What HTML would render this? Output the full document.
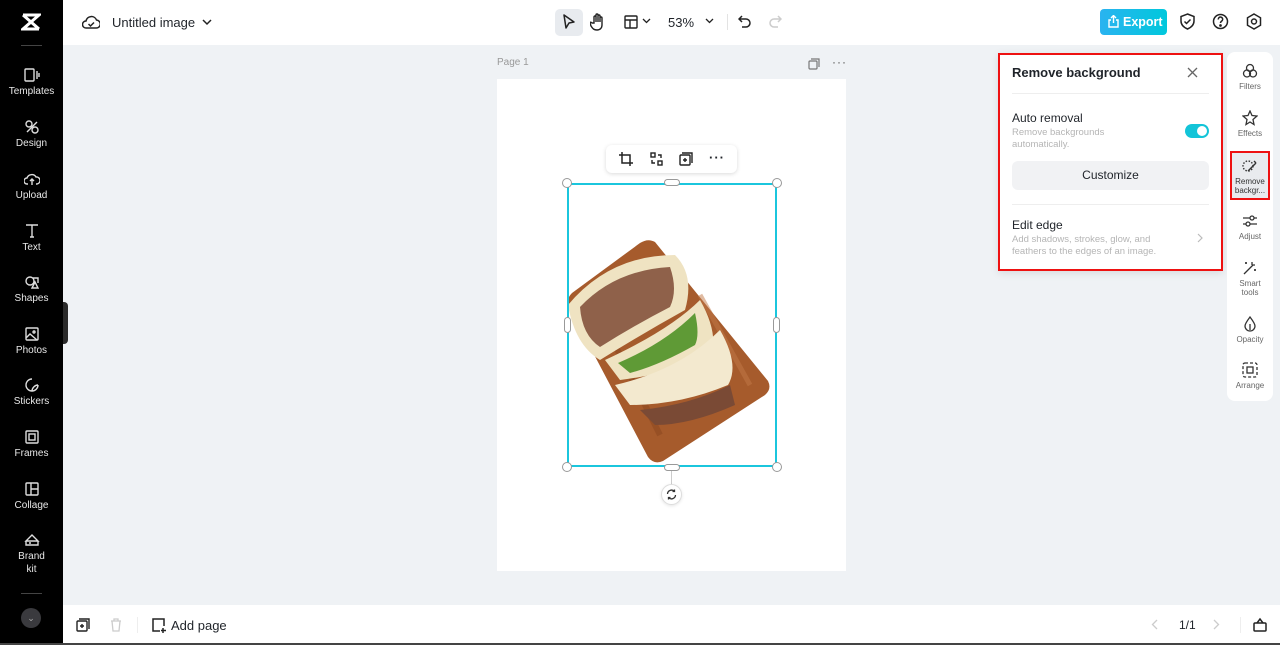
<!DOCTYPE html>
<html><head><meta charset="utf-8"><style>
*{margin:0;padding:0;box-sizing:border-box}
body{width:1280px;height:645px;overflow:hidden;background:#eff2f5;font-family:"Liberation Sans",sans-serif;position:relative;color:#1f2329}
.abs{position:absolute}
#side{left:0;top:0;width:63px;height:645px;background:#000}
.si{position:absolute;left:0;width:63px;text-align:center;color:#e8e8e8;font-size:10px;line-height:13px}
.si svg{display:block;margin:0 auto 3px}
#top{left:63px;top:0;width:1217px;height:45px;background:#fff}
#bot{left:63px;top:605px;width:1217px;height:40px;background:#fff}
.rt{position:absolute;left:0;width:46px;text-align:center;font-size:8px;line-height:9px;color:#666}
.rt svg{display:block;margin:0 auto 3px}
</style></head><body>
<div id="side" class="abs">
 <svg class="abs" style="left:21px;top:13px" width="20" height="18" viewBox="0 0 20 18"><path d="M2 2h16L2 16h16M2 2l16 14" stroke="#fff" stroke-width="3" fill="none"/></svg>
 <div class="abs" style="left:21px;top:45px;width:21px;height:1px;background:#444"></div>
 <div class="si" style="top:68px"><svg width="16" height="14" viewBox="0 0 16 14" fill="none" stroke="#ddd" stroke-width="1.4"><rect x="1" y="1" width="9" height="12" rx="1"/><path d="M13 3v8M15 5v4"/></svg>Templates</div>
 <div class="si" style="top:120px"><svg width="16" height="14" viewBox="0 0 16 14" fill="none" stroke="#ddd" stroke-width="1.4"><circle cx="5" cy="4" r="3"/><circle cx="11" cy="10" r="3"/><path d="M3 12l10-10"/></svg>Design</div>
 <div class="si" style="top:172px"><svg width="16" height="14" viewBox="0 0 16 14" fill="none" stroke="#ddd" stroke-width="1.4"><path d="M4 12H3a3 3 0 010-6 5 5 0 019-1 3 3 0 011 7h-1M8 13V7M6 9l2-2 2 2"/></svg>Upload</div>
 <div class="si" style="top:223px"><svg width="16" height="15" viewBox="0 0 16 15" fill="none" stroke="#ddd" stroke-width="1.4"><path d="M2 2h12M8 2v12M6 14h4"/></svg>Text</div>
 <div class="si" style="top:275px"><svg width="16" height="14" viewBox="0 0 16 14" fill="none" stroke="#ddd" stroke-width="1.4"><circle cx="6" cy="6" r="4"/><path d="M9 3h5v5M8 13l3-6 3 6z"/></svg>Shapes</div>
 <div class="si" style="top:327px"><svg width="16" height="14" viewBox="0 0 16 14" fill="none" stroke="#ddd" stroke-width="1.4"><rect x="2" y="1" width="12" height="12" rx="1"/><path d="M2 11l4-4 7 6"/><circle cx="10" cy="5" r="1"/></svg>Photos</div>
 <div class="si" style="top:378px"><svg width="16" height="14" viewBox="0 0 16 14" fill="none" stroke="#ddd" stroke-width="1.4"><path d="M14 7A6 6 0 118 1M14 7c-3 0-6 3-6 6"/></svg>Stickers</div>
 <div class="si" style="top:430px"><svg width="16" height="14" viewBox="0 0 16 14" fill="none" stroke="#ddd" stroke-width="1.4"><rect x="2" y="1" width="12" height="12" rx="1"/><rect x="5" y="4" width="6" height="6"/></svg>Frames</div>
 <div class="si" style="top:482px"><svg width="16" height="14" viewBox="0 0 16 14" fill="none" stroke="#ddd" stroke-width="1.4"><rect x="2" y="1" width="12" height="12" rx="1"/><path d="M7 1v12M7 7h7"/></svg>Collage</div>
 <div class="si" style="top:533px"><svg width="16" height="14" viewBox="0 0 16 14" fill="none" stroke="#ddd" stroke-width="1.4"><path d="M2 8l6-6 6 6zM2 8v4h12V8M5 10h2"/></svg>Brand<br>kit</div>
 <div class="abs" style="left:21px;top:593px;width:21px;height:1px;background:#444"></div>
 <div class="abs" style="left:21px;top:608px;width:20px;height:20px;border-radius:50%;background:#3a3a3e;color:#aaa;font-size:9px;text-align:center;line-height:20px">⌄</div>
 <div class="abs" style="left:63px;top:302px;width:5px;height:42px;background:#2a2a2a;border-radius:0 4px 4px 0"></div>
</div>

<div id="top" class="abs">
 <svg class="abs" style="left:19px;top:14px" width="18" height="16" viewBox="0 0 18 16" fill="none" stroke="#222" stroke-width="1.5"><path d="M5 14H4a3 3 0 010-7 5.5 5.5 0 0110.5-1A3.5 3.5 0 0114 14z"/><path d="M6.5 10l2 2 3.5-3.5"/></svg>
 <div class="abs" style="left:49px;top:15px;font-size:13px">Untitled image</div>
 <svg class="abs" style="left:139px;top:18px" width="10" height="8" viewBox="0 0 10 8"><path d="M1 2l4 4 4-4" stroke="#222" stroke-width="1.5" fill="none"/></svg>
 <div class="abs" style="left:492px;top:9px;width:28px;height:27px;background:#e8ebef;border-radius:5px"></div>
 <svg class="abs" style="left:499px;top:14px" width="14" height="16" viewBox="0 0 14 16"><path d="M2 1l10 7-5 1-3 5z" stroke="#222" stroke-width="1.5" fill="none" stroke-linejoin="round"/></svg>
 <svg class="abs" style="left:527px;top:13px" width="16" height="18" viewBox="0 0 16 18" fill="none" stroke="#222" stroke-width="1.4"><path d="M4 10V4a1 1 0 012 0v5V2a1 1 0 012 0v7V3a1 1 0 012 0v6V5a1 1 0 012 0v7c0 3-2 5-5 5s-4-1-6-4l-1-3c0-1 1-1 2 0z"/></svg>
 <svg class="abs" style="left:561px;top:15px" width="14" height="14" viewBox="0 0 14 14" fill="none" stroke="#222" stroke-width="1.4"><rect x="1" y="1" width="12" height="12" rx="1"/><path d="M1 5h12M6 5v8"/></svg>
 <svg class="abs" style="left:579px;top:18px" width="9" height="6" viewBox="0 0 9 6"><path d="M1 1l3.5 3.5L8 1" stroke="#222" stroke-width="1.3" fill="none"/></svg>
 <div class="abs" style="left:605px;top:15px;font-size:13px">53%</div>
 <svg class="abs" style="left:642px;top:18px" width="9" height="6" viewBox="0 0 9 6"><path d="M1 1l3.5 3.5L8 1" stroke="#222" stroke-width="1.3" fill="none"/></svg>
 <div class="abs" style="left:664px;top:14px;width:1px;height:16px;background:#e3e3e3"></div>
 <svg class="abs" style="left:675px;top:14px" width="14" height="16" viewBox="0 0 14 16" fill="none" stroke="#222" stroke-width="1.5"><path d="M4 2L1 5l3 3M1 5h7a4 4 0 010 8H4"/></svg>
 <svg class="abs" style="left:705px;top:14px" width="14" height="16" viewBox="0 0 14 16" fill="none" stroke="#ccc" stroke-width="1.5"><path d="M10 2l3 3-3 3M13 5H6a4 4 0 000 8h4"/></svg>
 <div class="abs" style="left:1037px;top:9px;width:67px;height:26px;border-radius:4px;background:linear-gradient(90deg,#2ab3f0,#00c8dc);color:#fff;font-size:12.5px;font-weight:bold;line-height:26px;padding-left:23px">Export</div>
 <svg class="abs" style="left:1045px;top:15px" width="11" height="13" viewBox="0 0 11 13" fill="none" stroke="#fff" stroke-width="1.4"><path d="M3 5H1v7h9V5H8M5.5 8V1M3 3l2.5-2.5L8 3"/></svg>
 <svg class="abs" style="left:1117px;top:13px" width="15" height="17" viewBox="0 0 15 17" fill="none" stroke="#222" stroke-width="1.5"><path d="M7.5 1L14 3.5V8c0 4-3 6.5-6.5 8C4 14.5 1 12 1 8V3.5z"/><path d="M4.5 8.5l2 2 4-4"/></svg>
 <svg class="abs" style="left:1149px;top:13px" width="17" height="17" viewBox="0 0 17 17" fill="none" stroke="#222" stroke-width="1.5"><circle cx="8.5" cy="8.5" r="7"/><path d="M6.3 6.5a2.2 2.2 0 114 1c-1 .7-1.8 1.2-1.8 2.5"/><circle cx="8.5" cy="12.5" r=".6" fill="#222"/></svg>
 <svg class="abs" style="left:1183px;top:13px" width="16" height="17" viewBox="0 0 16 17" fill="none" stroke="#222" stroke-width="1.5"><path d="M8 1l6.5 3.75v7.5L8 16l-6.5-3.75v-7.5z"/><circle cx="8" cy="8.5" r="2.5"/></svg>
</div>

<div class="abs" style="left:497px;top:57px;font-size:10px;color:#999">Page 1</div>
<svg class="abs" style="left:808px;top:58px" width="12" height="12" viewBox="0 0 12 12" fill="none" stroke="#777" stroke-width="1.2"><rect x="1" y="3" width="8" height="8" rx="1"/><path d="M3 1h8v8"/></svg>
<div class="abs" style="left:832px;top:55px;font-size:12px;color:#555;letter-spacing:1px">···</div>
<div class="abs" style="left:497px;top:79px;width:349px;height:492px;background:#fff"></div>

<!-- food: svg origin at (560,235) -->
<svg class="abs" style="left:560px;top:235px" width="220" height="235" viewBox="0 0 220 235">
 <path d="M95 7 Q88 3 80 8 L12 58 Q5 65 9 72 L88 222 Q94 230 103 226 L205 160 Q212 154 208 146 Z" fill="#a65b2c"/>
 <path d="M30 60 L100 200" stroke="#8a4720" stroke-width="6" opacity=".5"/>
 <path d="M140 60 L190 150" stroke="#c27a48" stroke-width="5" opacity=".5"/>
 <path d="M8 70 Q50 20 115 20 Q135 40 125 75 Q80 100 40 125 Q15 110 8 70 Z" fill="#efe3c2"/>
 <path d="M20 72 Q55 35 110 32 Q118 55 110 72 Q75 90 40 112 Q22 100 20 72 Z" fill="#8f614a"/>
 <path d="M45 125 Q110 95 140 65 Q160 100 150 125 Q100 140 60 145 Z" fill="#efe3c2"/>
 <path d="M58 128 Q105 108 135 78 Q140 100 135 110 Q100 130 70 138 Z" fill="#5f9a36"/>
 <path d="M55 150 Q120 135 160 95 Q180 130 168 150 Q120 170 70 170 Z" fill="#f3e9cf"/>
 <path d="M80 175 Q130 170 170 150 L175 170 Q130 190 95 190 Z" fill="#7a4a35"/>
</svg>

<!-- selection -->
<div class="abs" style="left:567px;top:183px;width:210px;height:284px;border:2px solid #1bc6dd"></div>
<div class="abs" style="left:562px;top:178px;width:10px;height:10px;border-radius:50%;background:#fff;border:1px solid #999"></div>
<div class="abs" style="left:772px;top:178px;width:10px;height:10px;border-radius:50%;background:#fff;border:1px solid #999"></div>
<div class="abs" style="left:562px;top:462px;width:10px;height:10px;border-radius:50%;background:#fff;border:1px solid #999"></div>
<div class="abs" style="left:772px;top:462px;width:10px;height:10px;border-radius:50%;background:#fff;border:1px solid #999"></div>
<div class="abs" style="left:664px;top:179px;width:16px;height:7px;border-radius:4px;background:#fff;border:1px solid #999"></div>
<div class="abs" style="left:664px;top:464px;width:16px;height:7px;border-radius:4px;background:#fff;border:1px solid #999"></div>
<div class="abs" style="left:564px;top:317px;width:7px;height:16px;border-radius:4px;background:#fff;border:1px solid #999"></div>
<div class="abs" style="left:773px;top:317px;width:7px;height:16px;border-radius:4px;background:#fff;border:1px solid #999"></div>
<div class="abs" style="left:671px;top:471px;width:1px;height:14px;background:#ccc"></div>
<div class="abs" style="left:661px;top:484px;width:21px;height:21px;border-radius:50%;background:#fff;border:1px solid #ddd;box-shadow:0 1px 3px rgba(0,0,0,.1)"></div>
<svg class="abs" style="left:666px;top:489px" width="11" height="11" viewBox="0 0 11 11" fill="none" stroke="#333" stroke-width="1.3"><path d="M1.5 5a4 4 0 017-2.5M9.5 6a4 4 0 01-7 2.5M8.5 0.5v2h-2M2.5 10.5v-2h2"/></svg>

<div class="abs" style="left:606px;top:145px;width:131px;height:28px;background:#fff;border-radius:6px;box-shadow:0 1px 4px rgba(0,0,0,.15)"></div>
<svg class="abs" style="left:619px;top:152px" width="14" height="14" viewBox="0 0 14 14" fill="none" stroke="#222" stroke-width="1.5"><path d="M3 0v11h11M0 3h11v11"/></svg>
<svg class="abs" style="left:650px;top:152px" width="13" height="14" viewBox="0 0 13 14" fill="none" stroke="#222" stroke-width="1.4"><rect x="1" y="1" width="4" height="4"/><rect x="8" y="9" width="4" height="4"/><path d="M8 3h3v3M5 11H2V8"/></svg>
<svg class="abs" style="left:679px;top:152px" width="14" height="14" viewBox="0 0 14 14" fill="none" stroke="#222" stroke-width="1.4"><rect x="1" y="3" width="10" height="10" rx="1"/><path d="M3 1h10v10M6 6v4M4 8h4"/></svg>
<div class="abs" style="left:709px;top:150px;font-size:13px;font-weight:bold;letter-spacing:1px">···</div>

<!-- remove bg panel -->
<div class="abs" style="left:998px;top:53px;width:225px;height:218px;background:#fff;border:2px solid #ee1111;box-shadow:0 2px 8px rgba(0,0,0,.1)"></div>
<div class="abs" style="left:1012px;top:65px;font-size:13px;font-weight:bold">Remove background</div>
<svg class="abs" style="left:1187px;top:67px" width="11" height="11" viewBox="0 0 11 11"><path d="M1 1l9 9M10 1l-9 9" stroke="#666" stroke-width="1.3"/></svg>
<div class="abs" style="left:1012px;top:93px;width:197px;height:1px;background:#eee"></div>
<div class="abs" style="left:1012px;top:111px;font-size:12px">Auto removal</div>
<div class="abs" style="left:1012px;top:127px;font-size:9.5px;color:#b5b5b5;line-height:12px">Remove backgrounds<br>automatically.</div>
<div class="abs" style="left:1185px;top:124px;width:24px;height:14px;border-radius:7px;background:#13c4d8"></div>
<div class="abs" style="left:1197px;top:126px;width:10px;height:10px;border-radius:50%;background:#fff"></div>
<div class="abs" style="left:1012px;top:161px;width:197px;height:29px;border-radius:6px;background:#f1f2f4;text-align:center;line-height:29px;font-size:12px">Customize</div>
<div class="abs" style="left:1012px;top:204px;width:197px;height:1px;background:#eee"></div>
<div class="abs" style="left:1012px;top:218px;font-size:12px">Edit edge</div>
<div class="abs" style="left:1012px;top:234px;font-size:9.5px;color:#b5b5b5;line-height:12px">Add shadows, strokes, glow, and<br>feathers to the edges of an image.</div>
<svg class="abs" style="left:1197px;top:233px" width="6" height="10" viewBox="0 0 6 10"><path d="M1 1l4 4-4 4" stroke="#bbb" stroke-width="1.2" fill="none"/></svg>

<!-- right tools -->
<div class="abs" style="left:1227px;top:52px;width:46px;height:349px;background:#fff;border-radius:8px">
 <div class="rt" style="top:11px"><svg width="16" height="16" viewBox="0 0 16 16" fill="none" stroke="#333" stroke-width="1.3"><circle cx="8" cy="5" r="3.5"/><circle cx="5" cy="10.5" r="3.5"/><circle cx="11" cy="10.5" r="3.5"/></svg>Filters</div>
 <div class="rt" style="top:58px"><svg width="16" height="16" viewBox="0 0 16 16" fill="none" stroke="#333" stroke-width="1.3"><path d="M8 1l2 4.5 5 .5-4 3.5 1 5-4-2.5-4 2.5 1-5-4-3.5 5-.5z"/></svg>Effects</div>
 <div class="abs" style="left:3px;top:99px;width:40px;height:49px;background:#e9ebee;border:2px solid #ee1111"></div>
 <div class="rt" style="top:106px;color:#333"><svg width="16" height="16" viewBox="0 0 16 16" fill="none" stroke="#333" stroke-width="1.4"><circle cx="6" cy="8" r="5" stroke-dasharray="1.5 1.5"/><path d="M6 13l8-8M12 3l2 2"/></svg>Remove<br>backgr...</div>
 <div class="rt" style="top:161px"><svg width="16" height="16" viewBox="0 0 16 16" fill="none" stroke="#333" stroke-width="1.3"><path d="M1 5h14M1 11h14"/><circle cx="10" cy="5" r="2" fill="#fff"/><circle cx="6" cy="11" r="2" fill="#fff"/></svg>Adjust</div>
 <div class="rt" style="top:208px"><svg width="16" height="16" viewBox="0 0 16 16" fill="none" stroke="#333" stroke-width="1.3"><path d="M2 14l9-9M10 2v3M13 5h-3M4 2v2M3 3h2M13 9v2M12 10h2"/></svg>Smart<br>tools</div>
 <div class="rt" style="top:264px"><svg width="16" height="16" viewBox="0 0 16 16" fill="none" stroke="#333" stroke-width="1.3"><path d="M8 1C5 5 3 8 3 10a5 5 0 0010 0c0-2-2-5-5-9zM8 8v6"/></svg>Opacity</div>
 <div class="rt" style="top:310px"><svg width="16" height="16" viewBox="0 0 16 16" fill="none" stroke="#333" stroke-width="1.3"><rect x="1" y="1" width="14" height="14" rx="2" stroke-dasharray="3 2"/><rect x="5" y="5" width="6" height="6"/></svg>Arrange</div>
</div>

<div id="bot" class="abs">
 <svg class="abs" style="left:13px;top:13px" width="14" height="14" viewBox="0 0 14 14" fill="none" stroke="#222" stroke-width="1.4"><rect x="1" y="3" width="10" height="10" rx="1"/><path d="M3 1h10v10M6 6v4M4 8h4"/></svg>
 <svg class="abs" style="left:47px;top:13px" width="12" height="14" viewBox="0 0 12 14" fill="none" stroke="#ccc" stroke-width="1.3"><path d="M1 3h10M4 3V1h4v2M2 3l1 10h6l1-10"/></svg>
 <div class="abs" style="left:74px;top:12px;width:1px;height:16px;background:#eee"></div>
 <svg class="abs" style="left:88px;top:12px" width="16" height="16" viewBox="0 0 16 16" fill="none" stroke="#222" stroke-width="1.5"><path d="M9 14H2V2h11v7M12 11v5M10 13.5h5"/></svg>
 <div class="abs" style="left:108px;top:13px;font-size:13px">Add page</div>
 <svg class="abs" style="left:1088px;top:14px" width="7" height="11" viewBox="0 0 7 11"><path d="M6 1L1.5 5.5 6 10" stroke="#ccc" stroke-width="1.3" fill="none"/></svg>
 <div class="abs" style="left:1116px;top:13px;font-size:12px">1/1</div>
 <svg class="abs" style="left:1150px;top:14px" width="7" height="11" viewBox="0 0 7 11"><path d="M1 1l4.5 4.5L1 10" stroke="#ccc" stroke-width="1.3" fill="none"/></svg>
 <div class="abs" style="left:1177px;top:12px;width:1px;height:16px;background:#eee"></div>
 <svg class="abs" style="left:1190px;top:12px" width="14" height="15" viewBox="0 0 14 15" fill="none" stroke="#222" stroke-width="1.5"><rect x="1" y="6" width="12" height="8" rx="1"/><path d="M4 6l3-4 3 4"/></svg>
</div>
<div class="abs" style="left:0;top:643px;width:1280px;height:2px;background:#444"></div>
</body></html>
